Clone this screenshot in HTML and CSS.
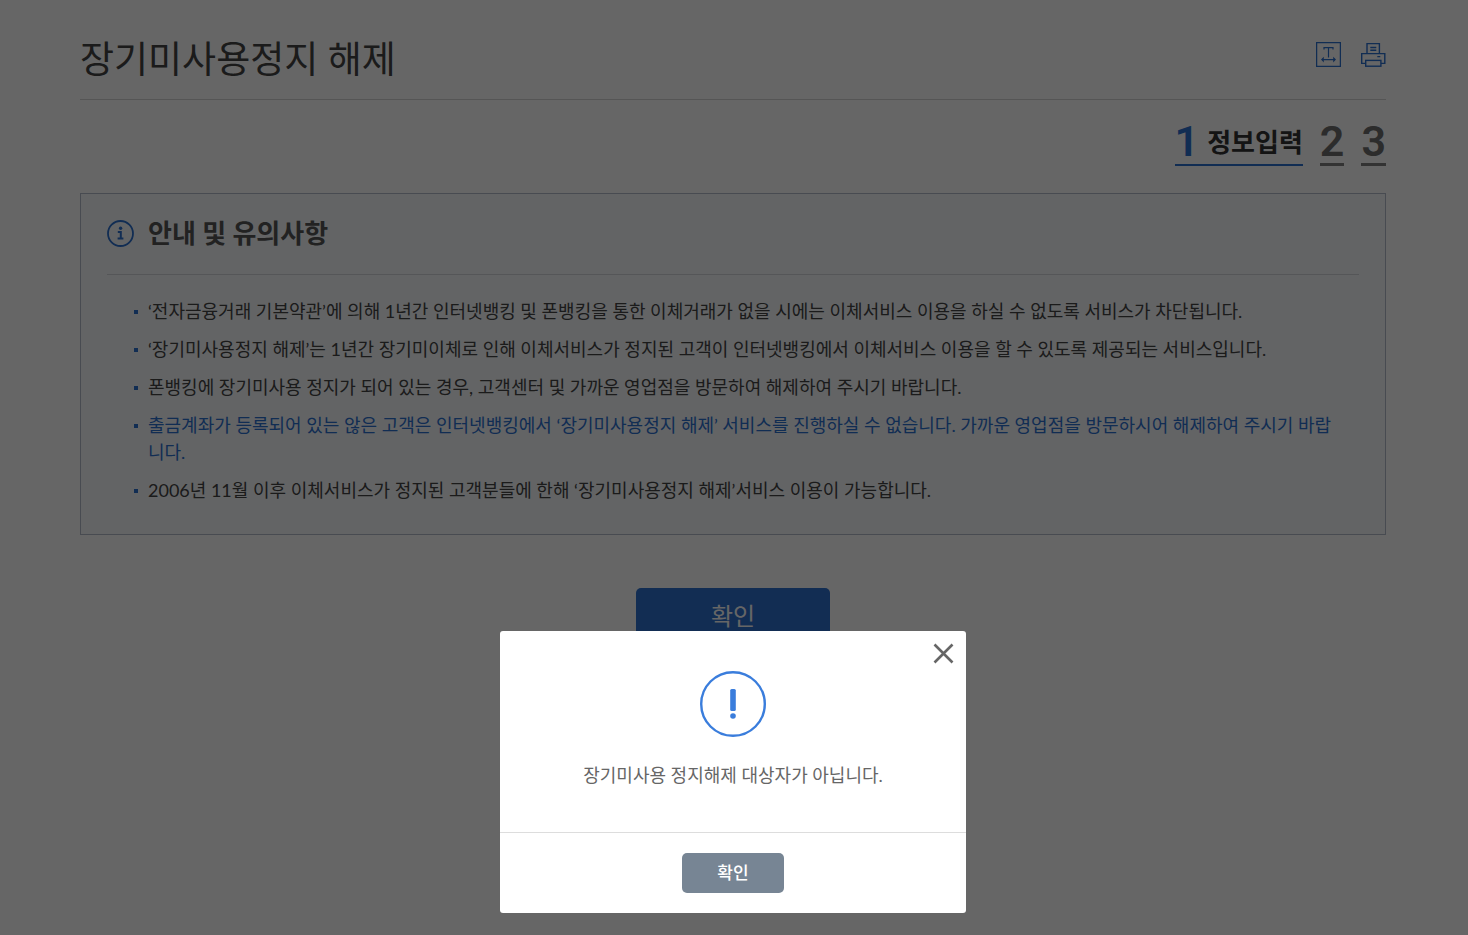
FILE: index.html
```html
<!DOCTYPE html>
<html lang="ko">
<head>
    <meta charset="UTF-8">
    <meta name="viewport" content="width=device-width, initial-scale=1.0">
    <title>장기미사용정지 해제</title>
    <link rel="stylesheet" href="styles.css">
</head>
<body>
    <main class="container">
        <header class="page-header">
            <h1>장기미사용정지 해제</h1>
            <div class="tools">
                <button type="button" class="icon-btn" aria-label="글자 크기">
                    <svg width="25" height="25" viewBox="0 0 25 25" fill="none" stroke="#2c70d0">
                        <rect x=".6" y=".6" width="23.8" height="23.8" stroke-width="1.3"/>
                        <path d="M8 7.5V5.6h9v1.9M12.5 5.6v9.9M6 17.6h13" stroke-width="1.2"/>
                        <path d="M5 17.6l2.8-2.8v5.6zM20 17.6l-2.8-2.8v5.6z" fill="#2c70d0" stroke="none"/>
                    </svg>
                </button>
                <button type="button" class="icon-btn" aria-label="인쇄">
                    <svg width="25" height="25" viewBox="0 0 25 25" fill="none" stroke="#2c70d0" stroke-width="1.4">
                        <path d="M6 11V1.6h12.4V11M4.5 21.4H.7V11.6h23.1v9.8H20"/>
                        <rect x="4.7" y="18.4" width="15.2" height="5.8"/>
                        <path d="M9.3 5.5h6M9.3 8.2h6M16.3 14.6h3"/>
                    </svg>
                </button>
            </div>
        </header>

        <ol class="steps">
            <li class="step active"><span class="num">1</span><span class="label">정보입력</span></li>
            <li class="step"><span class="num">2</span></li>
            <li class="step"><span class="num">3</span></li>
        </ol>

        <section class="notice">
            <h2>
                <svg width="27" height="27" viewBox="0 0 27 27" fill="none" stroke="#2c70d0">
                    <circle cx="13.5" cy="13.5" r="12.5" stroke-width="1.8"/>
                    <path d="M10.8 11.9h3v6.4M10.6 18.5h5.8" stroke-width="2"/>
                    <circle cx="13.6" cy="8.2" r="1.7" fill="#2c70d0" stroke="none"/>
                </svg>
                안내 및 유의사항
            </h2>
            <ul class="notice-list">
                <li>‘전자금융거래 기본약관’에 의해 1년간 인터넷뱅킹 및 폰뱅킹을 통한 이체거래가 없을 시에는 이체서비스 이용을 하실 수 없도록 서비스가 차단됩니다.</li>
                <li>‘장기미사용정지 해제’는 1년간 장기미이체로 인해 이체서비스가 정지된 고객이 인터넷뱅킹에서 이체서비스 이용을 할 수 있도록 제공되는 서비스입니다.</li>
                <li>폰뱅킹에 장기미사용 정지가 되어 있는 경우, 고객센터 및 가까운 영업점을 방문하여 해제하여 주시기 바랍니다.</li>
                <li class="point">출금계좌가 등록되어 있는 않은 고객은 인터넷뱅킹에서 ‘장기미사용정지 해제’ 서비스를 진행하실 수 없습니다. 가까운 영업점을 방문하시어 해제하여 주시기 바랍니다.</li>
                <li>2006년 11월 이후 이체서비스가 정지된 고객분들에 한해 ‘장기미사용정지 해제’서비스 이용이 가능합니다.</li>
            </ul>
        </section>

        <div class="btn-area">
            <button type="button" class="btn-primary">확인</button>
        </div>
    </main>

    <!-- 알림 레이어 -->
    <div class="overlay">
        <div class="modal" role="alertdialog" aria-modal="true" aria-describedby="alert-msg">
            <button type="button" class="btn-close" aria-label="닫기">
                <svg width="21" height="21" viewBox="0 0 21 21" stroke="#666" stroke-width="2.6">
                    <path d="M1.5 1.5l18 18M19.5 1.5l-18 18"/>
                </svg>
            </button>
            <div class="modal-body">
                <svg width="66" height="66" viewBox="0 0 66 66">
                    <circle cx="33" cy="33" r="31.8" fill="none" stroke="#3a7ddc" stroke-width="2.4"/>
                    <rect x="30.2" y="18" width="5.6" height="22" rx="1.5" fill="#3a7ddc"/>
                    <circle cx="33" cy="45" r="2.8" fill="#3a7ddc"/>
                </svg>
                <p id="alert-msg">장기미사용 정지해제 대상자가 아닙니다.</p>
            </div>
            <div class="modal-footer">
                <button type="button" class="btn-confirm">확인</button>
            </div>
        </div>
    </div>
</body>
</html>
```
FILE: styles.css
```css
* {
    box-sizing: border-box;
}

body {
    margin: 0;
    font-family: Lato, 'Noto Sans CJK KR', sans-serif;
    font-size: 18px;
    line-height: 27px;
    color: #444;
    background: #fff;
}

h1, h2, p, ul, ol {
    margin: 0;
    padding: 0;
}

ul, ol {
    list-style: none;
}

svg {
    display: block;
}

button {
    padding: 0;
    border: 0;
    font-family: inherit;
    cursor: pointer;
}

.container {
    padding: 0 82px 0 80px;
}

.page-header {
    display: flex;
    justify-content: space-between;
    align-items: flex-start;
    padding: 35px 0 16px;
    border-bottom: 1px solid #d5d5d5;
}

.page-header h1 {
    font-size: 37px;
    font-weight: 400;
    line-height: 48px;
    color: #444;
}

.tools {
    display: flex;
    gap: 20px;
    padding-top: 7px;
}

.icon-btn {
    background: none;
}

/* 단계 표시 */
.steps {
    display: flex;
    justify-content: flex-end;
    gap: 17px;
    margin-top: 20px;
}

.step {
    display: flex;
    align-items: center;
    height: 46px;
    border-bottom: 3px solid #808080;
    color: #6e6e6e;
}

.step .num {
    padding-bottom: 2px;
    font-family: Roboto, sans-serif;
    font-size: 43px;
    font-weight: 600;
    line-height: 42px;
}

.step.active {
    gap: 8px;
    border-bottom: 2px solid #2c70d0;
    color: #333;
}

.step.active .num {
    color: #2c70d0;
}

.step .label {
    font-size: 26px;
    font-weight: 700;
}

/* 안내 및 유의사항 */
.notice {
    margin-top: 27px;
    padding: 19px 26px 30px;
    border: 1px solid #b4bccb;
    background: #f7fafd;
}

.notice h2 {
    display: flex;
    align-items: center;
    gap: 14px;
    padding-bottom: 21px;
    border-bottom: 1px solid #d5d8dc;
    font-size: 26px;
    font-weight: 700;
    line-height: 40px;
    color: #555;
}

.notice-list {
    padding: 23px 14px 0 27px;
}

.notice-list li {
    position: relative;
    padding-left: 14px;
}

.notice-list li + li {
    margin-top: 11px;
}

.notice-list li::before {
    content: '';
    position: absolute;
    left: 0;
    top: 12px;
    width: 4px;
    height: 4px;
    background: #2c70d0;
}

.notice-list .point {
    color: #2c70d0;
}

.btn-area {
    margin-top: 53px;
    text-align: center;
}

.btn-primary {
    width: 194px;
    height: 56px;
    padding-bottom: 3px;
    border-radius: 5px;
    background: #2d70cf;
    color: #fff;
    font-size: 24px;
}

/* 알림 레이어 */
.overlay {
    position: fixed;
    inset: 0;
    display: flex;
    justify-content: center;
    align-items: flex-end;
    padding: 0 82px 22px 80px;
    background: rgba(0, 0, 0, 0.6);
}

.modal {
    position: relative;
    width: 466px;
    border-radius: 3px;
    background: #fff;
    color: #666;
}

.btn-close {
    position: absolute;
    top: 12px;
    right: 12px;
    background: none;
}

.modal-body {
    display: flex;
    flex-direction: column;
    align-items: center;
    gap: 25px;
    padding: 40px 20px 43px;
}

.modal-footer {
    padding: 20px;
    border-top: 1px solid #ddd;
    text-align: center;
}

.btn-confirm {
    display: block;
    width: 102px;
    height: 40px;
    margin: 0 auto;
    padding-bottom: 3px;
    border-radius: 5px;
    background: #778594;
    color: #fff;
    font-size: 17px;
    font-weight: 500;
}
```
